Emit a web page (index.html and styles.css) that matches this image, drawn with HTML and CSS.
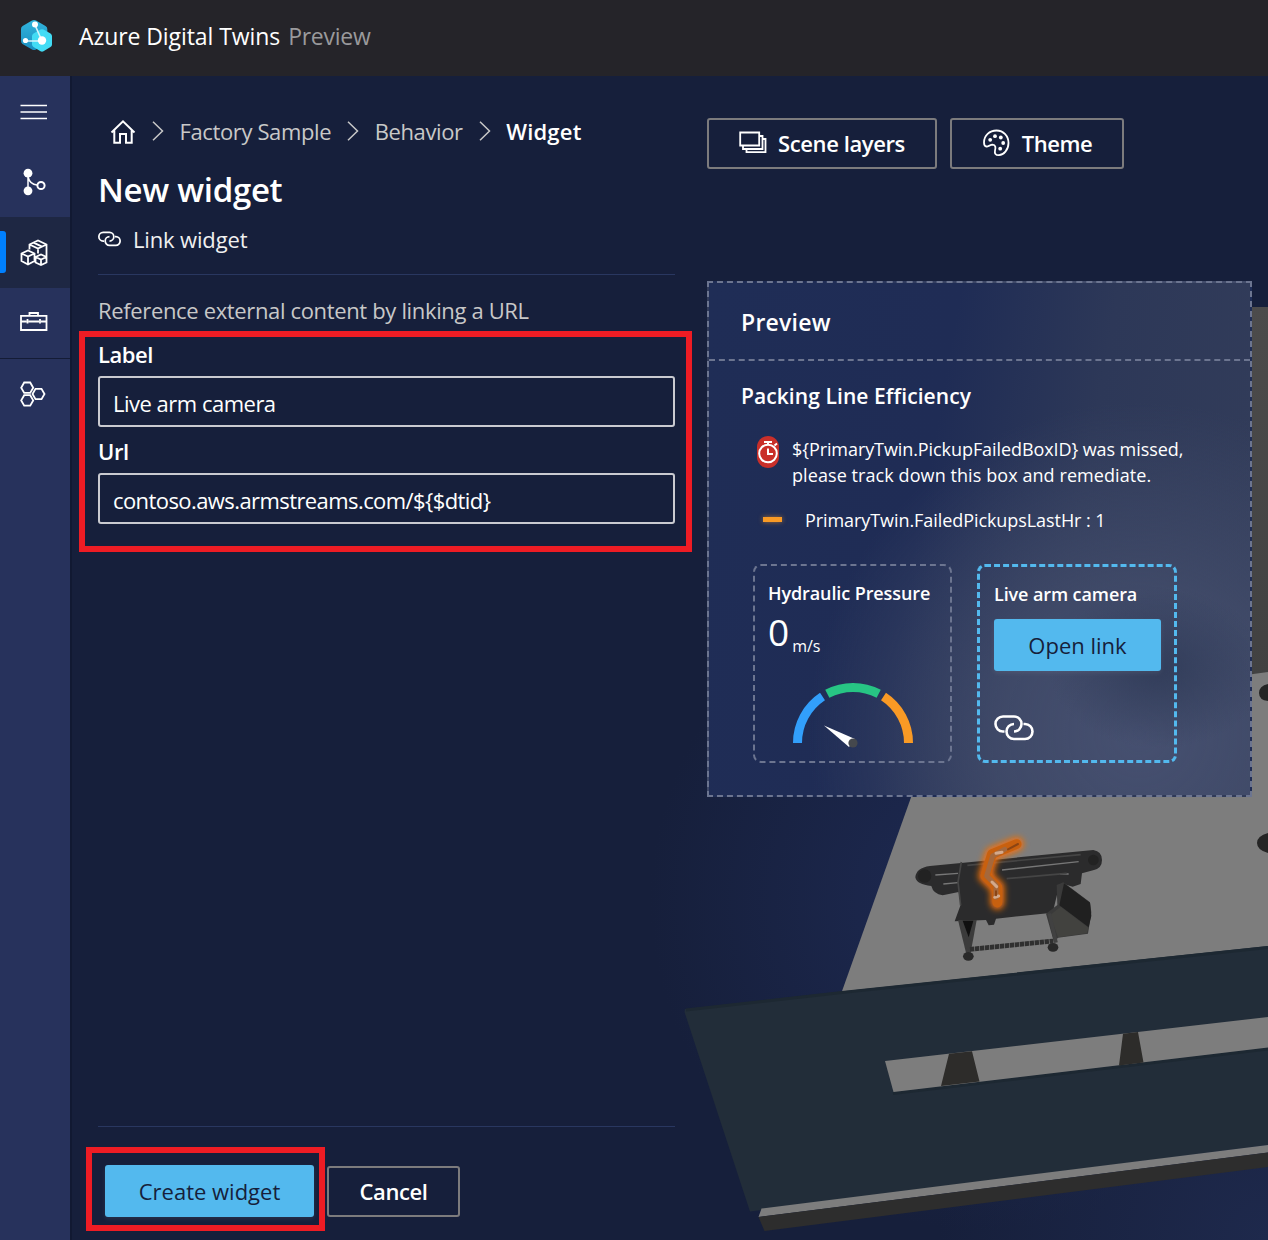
FILE: index.html
```html
<!DOCTYPE html>
<html lang="en">
<head>
<meta charset="utf-8">
<title>Azure Digital Twins</title>
<link rel="stylesheet" href="styles.css">
</head>
<body>
<header class="topbar">
  <svg class="logo" width="32" height="34" viewBox="0 0 32 34">
    <defs><linearGradient id="lg" x1="0" y1="0" x2="0" y2="1"><stop offset="0" stop-color="#32b4dc"/><stop offset="1" stop-color="#1a8fc0"/></linearGradient></defs>
    <path d="M12 1.6q2-1.2 4 0l9.5 5.5q1.8 1.2 1.800 3v12q0 2-1.800 3L16 30.500q-2 1.200-4 0L2.500 25Q1 24 1 22V10q0-2 1.600-3z" fill="url(#lg)"/>
    <path d="M20.500 10.600q1.500-.8 3 0l7 4q1.500 1 1.500 2.500v8.500q0 1.600-1.500 2.500l-7 4.200q-1.500.8-3 0l-7-4.200Q12 27 12 25.600v-8.500q0-1.500 1.500-2.500z" fill="#42dcf5"/>
    <path d="M15 6l7 16H5.500" fill="none" stroke="#d8f5fc" stroke-width="1.600"/>
    <circle cx="15" cy="5.500" r="3" fill="#fff"/><circle cx="5.500" cy="21.500" r="2.600" fill="#fff"/><circle cx="22" cy="21.500" r="4.200" fill="#fff"/>
  </svg>
  <span class="brand">Azure Digital Twins</span>
  <span class="brand-tag">Preview</span>
</header>
<div class="shell">
  <nav class="rail">
    <a class="rail-item menu"><svg width="28" height="28" viewBox="0 0 28 28"><path d="M.5 7.500h26.500M.5 14h26.500M.5 20.500h26.500" class="s15"/></svg></a>
    <a class="rail-item"><svg width="28" height="28" viewBox="0 0 28 28"><path d="M8 5v18M8 9q2 7.500 9 8" class="s15"/><circle cx="8" cy="5.200" r="4.400" fill="#fff"/><circle cx="8" cy="22.800" r="4.400" fill="#fff"/><circle cx="21" cy="17.500" r="3.600" class="s2"/></svg></a>
    <a class="rail-item active"><svg width="28" height="28" viewBox="0 0 28 28"><path d="M1.500 14.500l6.500-3 6.500 3v7.500L8 25.500 1.500 22zM1.500 14.500L8 17.500l6.500-3M8 17.500v8M9.500 10.500V5.500L18 1.500l8.500 4v12M9.500 5.500l8.500 4 8.500-4M13.500 3.600l8.500 4M18 9.500v5M15.500 18l5.500-2.500 5.500 2.500v5.500L21 26l-5.500-2.500zM15.500 18l5.500 2.500 5.500-2.500M21 20.500V26" class="s18"/></svg></a>
    <a class="rail-item toolbox"><svg width="28" height="28" viewBox="0 0 28 28"><path d="M1 8.800h25.500v14.200H1zM9.500 8.500V6h8.500v2.500M1 14.500h5.500M8.500 14.500h10.500M21 14.500h5.500M7.500 12v4.500M20 12v4.500" class="s18"/></svg></a>
    <a class="rail-item split"><svg width="28" height="28" viewBox="0 0 28 28"><path d="M4.200 2.500h6l3 5.200-3 5.200h-6l-3-5.200zM4.200 15.200h6l3 5.200-3 5.200h-6l-3-5.200zM15.500 8.800h6l3 5.200-3 5.200h-6l-3-5.200z" class="s18"/></svg></a>
  </nav>
  <main class="stage">
    <svg class="scene" viewBox="72 76 1196 1164" width="1196" height="1164">
      <defs>
        <radialGradient id="glow" gradientUnits="userSpaceOnUse" cx="980" cy="900" r="330"><stop offset="0" stop-color="#1e2a53"/><stop offset="1" stop-color="#161f3b"/></radialGradient>
        <radialGradient id="glow2" gradientUnits="userSpaceOnUse" cx="1268" cy="1240" r="330"><stop offset="0" stop-color="#1e294c"/><stop offset="1" stop-color="#1e294c" stop-opacity="0"/></radialGradient>
        <linearGradient id="wall" x1="0" y1="0" x2="0" y2="1"><stop offset="0" stop-color="#4c4b4b"/><stop offset="1" stop-color="#414141"/></linearGradient>
        <filter id="halo" x="-50%" y="-50%" width="200%" height="200%"><feGaussianBlur stdDeviation="9"/></filter>
      </defs>
      <path fill="#161f3b" d="M72 76h1196v1164H72z"/>
      <path fill="url(#glow)" d="M640 560h628v680H640z"/>
      <path fill="url(#glow2)" d="M900 900h368v340H900z"/>
      <path fill="url(#wall)" d="M1200 307h68v368h-68z"/>
      <path fill="#7d7d7d" d="M935 730l200-40 133-18v290L841 994z"/>
      <path fill="#252525" d="M1268 684q-9 2-9 9t9 8zM1268 833q-11 3-11 10t11 10z"/>
      <g transform="translate(880 800) scale(.33333)">
        <path fill="#2b2b2c" d="M150 198L640 150q26 4 26 30 0 24-24 30l-36 10-4 32-24 8-20-6-24 18-16 66-170 18-6 18-16 2-8-16-94 4 18-50-6-38-48 10q-28-4-34-28-44-4-48-26 2-28 44-34z"/>
        <path fill="none" stroke="#777" stroke-width="4" d="M166 225l68-5M366 210l230-25M190 252l44-4M540 222h26"/>
        <path fill="none" stroke="#454545" stroke-width="5" d="M244 186l-10 60 8 70M262 196l340-32M380 236l180-16"/>
        <path fill="#3a3a3a" d="M530 255l20-8 80 60 4 30-10 64-90 12-12 14-24-86 34-26z"/>
        <path fill="#202020" d="M552 250l78 58 4 40-8 34-88-66z"/>
        <path fill="#42423f" d="M542 320l84 64-6 16-86 12-24-66z"/>
        <path fill="#3b3b3b" d="M234 360h56l-18 98h-14z"/><path fill="#101010" d="M248 362h32l-14 50z"/>
        <path fill="none" stroke="#303030" stroke-width="14" stroke-dasharray="13 2" d="M270 448l250-25"/>
        <path fill="none" stroke="#414141" stroke-width="11" d="M508 340l20 88"/>
        <ellipse cx="265" cy="469" rx="16" ry="13" fill="#292929"/><ellipse cx="519" cy="442" rx="16" ry="13" fill="#292929"/>
        <circle cx="640" cy="180" r="16" fill="#222"/><circle cx="134" cy="228" r="20" fill="#222"/>
        <path filter="url(#halo)" fill="none" stroke="#f07010" stroke-width="42" stroke-linecap="round" stroke-linejoin="round" d="M410 132l-74 30-20 66 36 34v46"/>
        <path fill="none" stroke="#c8600f" stroke-width="29" stroke-linecap="round" stroke-linejoin="round" d="M410 132l-74 30-20 66 36 34v46"/>
        <path fill="none" stroke="#a5683c" stroke-width="15" stroke-linecap="round" stroke-linejoin="round" d="M374 148l-36 20-18 60 28 28v36"/>
        <path fill="none" stroke="#d3a98c" stroke-width="9" stroke-linecap="round" d="M348 160l18-3M336 246l14 14M344 292l12-4"/>
        <path fill="none" stroke="#8a4414" stroke-width="6" stroke-linecap="round" d="M384 148l30-16M348 274v12"/>
      </g>
      <path fill="#222d39" d="M685 1009l156-17.500L1268 946v199L750 1211.500 684.500 1012z"/>
      <path fill="none" stroke="#1d2832" stroke-width="3" d="M686 1010l156-17.500L1268 947.500M893 1093.500l375-44.500"/>
      <path fill="#7d7d7d" d="M885 1061l383-44v30.500L893.500 1092z"/>
      <path fill="#2d2c2a" d="M949 1053.700l23-2.500 7.500 30.300-38.500 4.500zM1123 1033.700l15-1.700 5.500 30.500-24.500 3z"/>
      <path fill="#7d7d7d" d="M761.500 1208.500L1268 1145v7.500L758.500 1217z"/>
      <path fill="#2d2d2d" d="M758.500 1217L1268 1152.500v14.500l-503.500 64z"/>
    </svg>
    <section class="panel">
      <div class="crumbs">
        <svg class="home" width="26" height="26" viewBox="0 0 26 26"><path d="M1.500 13.500L13 2.300l11.500 11.200M4.300 11.500v12.200h5.700V15h6v8.700h5.700V11.500" class="s2"/></svg>
        <svg class="chev" width="12" height="20" viewBox="0 0 12 20"><path d="M1 .8l9.500 9.200L1 19.200" class="s15 dim"/></svg>
        <span class="c1">Factory Sample</span>
        <svg class="chev" width="12" height="20" viewBox="0 0 12 20"><path d="M1 .8l9.500 9.200L1 19.200" class="s15 dim"/></svg>
        <span class="c2">Behavior</span>
        <svg class="chev" width="12" height="20" viewBox="0 0 12 20"><path d="M1 .8l9.500 9.200L1 19.200" class="s15 dim"/></svg>
        <b class="c3">Widget</b>
      </div>
      <h1>New widget</h1>
      <div class="kind"><svg width="23" height="16" viewBox="0 0 40 26"><path d="M10.500 16.500H9A7.500 7.500 0 0 1 9 1.500h11a7.500 7.500 0 0 1 0 15M29.500 9H31a7.500 7.500 0 0 1 0 15H20a7.500 7.500 0 0 1 0-15" class="s3"/></svg><span>Link widget</span></div>
      <hr>
      <p class="hint">Reference external content by linking a URL</p>
      <div class="fields">
        <label>Label</label>
        <div class="input">Live arm camera</div>
        <label class="second">Url</label>
        <div class="input url">contoso.aws.armstreams.com/${$dtid}</div>
      </div>
      <hr class="foot-line">
      <div class="actions">
        <div class="mark"><button class="primary">Create widget</button></div>
        <button class="outline cancel">Cancel</button>
      </div>
    </section>
    <section class="side">
      <div class="tools">
        <button class="outline layers"><svg width="28" height="23" viewBox="0 0 28 23"><path d="M1.200 1.500h19v13h-19zM4 15v3h19.500V5h-3M7.500 18.500v2.700h19V8h-3" class="s18"/></svg><span>Scene layers</span></button>
        <button class="outline theme"><svg width="28" height="28" viewBox="0 0 28 28"><path d="M2 13.500C2 6.500 7.500 1.500 14.500 1.500S26.500 7 26.500 14s-5 12-9.500 12.200c-3.500.2-4.600-2-4-4.400.9-3.200.6-6.100-2.500-6.200-2.600 0-3.200 2.300-6 1.900C2.400 17.200 2 15.500 2 13.500z" class="s18"/><g fill="#fff"><circle cx="8.200" cy="10.800" r="1.900"/><circle cx="13" cy="7.200" r="1.900"/><circle cx="18.800" cy="8.500" r="1.900"/><circle cx="21.200" cy="14" r="1.900"/><circle cx="18.200" cy="19.700" r="1.900"/></g></svg><span>Theme</span></button>
      </div>
      <div class="preview">
        <div class="preview-head">Preview</div>
        <div class="preview-body">
          <h2>Packing Line Efficiency</h2>
          <div class="alert">
            <svg width="24" height="32" viewBox="0 0 24 32"><rect x="1" y="0" width="22" height="32" rx="11" fill="#c92f2a"/><circle cx="12" cy="17.500" r="8.800" class="s2"/><path d="M8 6h8M12 6v3M18.500 9.500l2.500-2M12 12.500V18h5" class="s2"/></svg>
            <p><span>${PrimaryTwin.PickupFailedBoxID} was missed,</span><br><span class="line2">please track down this box and remediate.</span></p>
          </div>
          <div class="metric"><i></i><span>PrimaryTwin.FailedPickupsLastHr : 1</span></div>
          <div class="cards">
            <div class="card">
              <h3>Hydraulic Pressure</h3>
              <div class="value"><b>0</b><small>m/s</small></div>
              <svg class="gauge" width="122" height="66" viewBox="-61 -61 122 66">
                <g fill="none" stroke-width="9"><path stroke="#329ffb" d="M-55.500 0A55.500 55.500 0 0 1-30.500-46.400"/><path stroke="#27c584" d="M-25.700-49.200A55.500 55.500 0 0 1 25.700-49.200"/><path stroke="#f99a25" d="M30.500-46.400A55.500 55.500 0 0 1 55.500 0"/></g>
                <path fill="#fff" d="M-29-17.500L2-4-4 4z"/><circle r="4.600" fill="#45484d"/>
              </svg>
            </div>
            <div class="card selected">
              <h3>Live arm camera</h3>
              <button class="primary open">Open link</button>
              <svg class="chain" width="40" height="26" viewBox="0 0 40 26"><path d="M10.500 16.500H9A7.500 7.500 0 0 1 9 1.500h11a7.500 7.500 0 0 1 0 15M29.500 9H31a7.500 7.500 0 0 1 0 15H20a7.500 7.500 0 0 1 0-15" class="s22"/></svg>
            </div>
          </div>
        </div>
      </div>
    </section>
  </main>
</div>
</body>
</html>
```
FILE: styles.css
```css
* { box-sizing: border-box; }
body { margin: 0; width: 1268px; height: 1240px; overflow: hidden; background: #161f3b; color: #fff; font-family: "Open Sans", "Noto Sans", sans-serif; font-size: 22px; display: flex; flex-direction: column; }
h1, h2, h3, p { margin: 0; white-space: nowrap; }
span, b, small { white-space: nowrap; }
svg { flex: none; display: block; }
button { font: inherit; padding: 0; display: flex; align-items: center; justify-content: center; }
.s15, .s18, .s2, .s22, .s3 { fill: none; stroke: #fff; }
.s15 { stroke-width: 1.5; }
.s18 { stroke-width: 1.8; }
.s2 { stroke-width: 2; }
.s22 { stroke-width: 2.6; }
.s3 { stroke-width: 3; }
.dim { stroke: #c8c8c8; }

.topbar { height: 76px; flex: none; background: #252429; display: flex; align-items: center; padding: 0 0 4px 20px; }
.brand { margin-left: 27px; font-size: 23px; letter-spacing: -.08px; }
.brand-tag { margin-left: 8px; font-size: 23px; letter-spacing: -.25px; color: #9a9a9c; }
.shell { flex: 1; display: flex; min-height: 0; }
.rail { width: 72px; flex: none; background: #27325c; border-right: 2px solid #111932; }
.rail-item { height: 70.5px; display: flex; align-items: center; padding-left: 20px; }
.rail-item.menu { padding-top: 2px; }
.rail-item.toolbox { padding-bottom: 3px; }
.rail-item.active { background: #1e2743; position: relative; padding-top: 1px; }
.rail-item.active::before { content: ""; position: absolute; left: 0; top: 14px; width: 6px; height: 42px; background: #0080ff; border-radius: 0 3px 3px 0; }
.rail-item.split { border-top: 1px solid #141c36; }

.stage { flex: 1; position: relative; display: flex; gap: 32px; padding-left: 26px; }
.scene { position: absolute; left: 0; top: 0; }
.panel { position: relative; width: 577px; flex: none; display: flex; flex-direction: column; padding: 36px 0 9px; }
.crumbs { height: 40px; display: flex; align-items: center; padding: 0 0 2px 12px; color: #c8c8c8; letter-spacing: -.38px; }
.crumbs .home { margin-top: 2px; }
.crumbs .chev { margin: 0 15.5px 0 16px; }
.crumbs b { color: #fff; font-weight: 600; letter-spacing: .2px; }
h1 { margin-top: 14px; height: 48px; line-height: 47px; font-size: 33px; font-weight: 600; letter-spacing: -.3px; }
.kind { margin-top: 10px; height: 30px; display: flex; align-items: center; gap: 12px; color: #f0f0f0; letter-spacing: -.15px; }
hr { margin: 20px 0 0; border: 0; height: 1px; width: 100%; background: #293760; }
.hint { margin-top: 20px; height: 31px; line-height: 30px; color: #c8c8c8; letter-spacing: -.35px; }
.fields { margin: 5px -17px 0 -19px; border: 6px solid #ee1c24; padding: 2px 11px 22px 13px; }
.fields label { display: block; height: 30px; line-height: 30px; font-weight: 600; letter-spacing: -.45px; margin-bottom: 7px; }
.fields label.second { margin: 9px 0 7px; }
.input { height: 51px; border: 2px solid #c9cad0; border-radius: 3px; padding-left: 13px; line-height: 50px; letter-spacing: -.5px; }
.input.url { letter-spacing: -.58px; }
hr.foot-line { margin-top: auto; }
.actions { display: flex; gap: 2px; margin: 20px 0 0 -12px; }
.mark { border: 6px solid #ee1c24; padding: 12px 5px 8px 13px; }
.primary { width: 209px; height: 52px; border: 0; border-radius: 3px; background: #53b9ee; color: #161f3b; box-shadow: 0 2px 5px #ffffff14; }
.outline { height: 51px; border: 2px solid #7c7b7d; border-radius: 3px; background: #161f3b; color: #fff; font-weight: 600; letter-spacing: -.4px; padding-bottom: 2px; }
.cancel { width: 133px; margin-top: 19px; }

.side { position: relative; width: 545px; padding-top: 42px; }
.tools { display: flex; gap: 13px; }
.layers { width: 230px; gap: 11px; }
.theme { width: 174px; gap: 12px; }
.preview { margin-top: 112px; height: 516px; border: 2px dashed #6c7590; background: radial-gradient(ellipse 110px 80px at 450px 385px, #323d5a 0, #323d5a00 100%), radial-gradient(ellipse 330px 330px at 430px 450px, #465070 0, #434d6bcc 45%, #434d6b00 100%), linear-gradient(100deg, #1f2d56 0, #1f2c55 40%, #2d3858 65%, #333d5a 100%); }
.preview-head { height: 78px; border-bottom: 2px dashed #6c7590; padding: 2px 0 0 32px; display: flex; align-items: center; font-weight: 600; font-size: 23px; letter-spacing: .25px; }
.preview-body { padding: 20px 0 0 32px; }
h2 { font-size: 21px; line-height: 31px; height: 32px; font-weight: 600; letter-spacing: .08px; }
.alert { display: flex; gap: 12px; padding-left: 15px; margin-top: 23px; font-size: 18px; letter-spacing: -.08px; }
.alert p { line-height: 25.5px; padding-top: 1px; }
.alert .line2 { letter-spacing: .08px; }
.metric { display: flex; align-items: center; height: 26px; margin-top: 19px; padding-left: 22px; font-size: 18px; letter-spacing: -.07px; }
.metric i { width: 19px; height: 5px; margin: -2px 23px 0 0; background: #f99a25; box-shadow: 0 0 5px #f99a2599; }
.cards { display: flex; gap: 25px; margin: 31px 0 0 12px; }
.card { width: 199px; height: 199px; border: 2px dashed #6c7590; border-radius: 8px; padding: 12px 0 0 13px; }
h3 { font-size: 18px; line-height: 30px; font-weight: 600; letter-spacing: -.1px; }
.value { display: flex; align-items: baseline; height: 48px; line-height: 48px; }
.value b { font-size: 37px; font-weight: 400; }
.value small { font-size: 16px; margin-left: 3px; position: relative; top: 6px; }
.gauge { margin: 26px 0 0 24px; }
.card.selected { width: 200px; border: 3px dashed #53b9ee; padding: 12px 0 0 14px; }
.open { width: 167px; margin-top: 10px; }
.chain { margin-top: 44px; }
```
